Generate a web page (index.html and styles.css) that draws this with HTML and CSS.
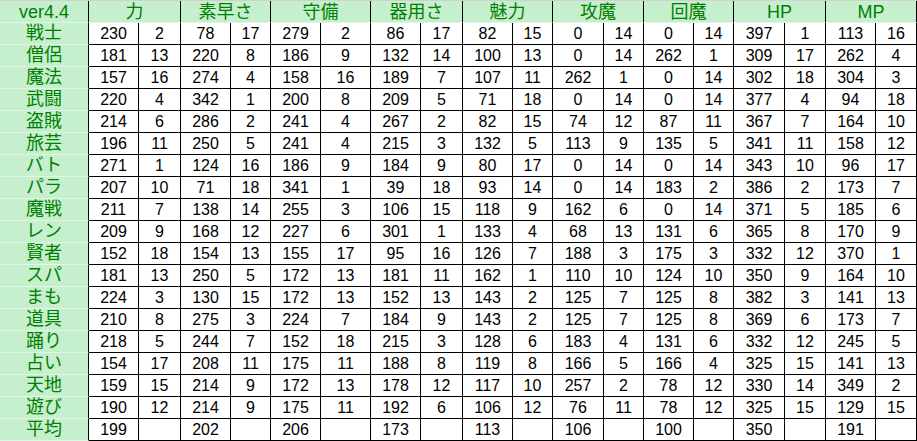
FILE: index.html
```html
<!DOCTYPE html>
<html lang="ja">
<head>
<meta charset="utf-8">
<title>ver4.4</title>
<link rel="stylesheet" href="styles.css">
</head>
<body>
<div class="sheet">
  <div class="row head">
    <span class="lab">ver4.4</span><span class="h">力</span><span class="h">素早さ</span><span class="h">守備</span><span class="h">器用さ</span><span class="h">魅力</span><span class="h">攻魔</span><span class="h">回魔</span><span class="h">HP</span><span class="h">MP</span>
  </div>
  <div class="row"><span class="lab">戦士</span><span>230</span><span>2</span><span>78</span><span>17</span><span>279</span><span>2</span><span>86</span><span>17</span><span>82</span><span>15</span><span>0</span><span>14</span><span>0</span><span>14</span><span>397</span><span>1</span><span>113</span><span>16</span></div>
  <div class="row"><span class="lab">僧侶</span><span>181</span><span>13</span><span>220</span><span>8</span><span>186</span><span>9</span><span>132</span><span>14</span><span>100</span><span>13</span><span>0</span><span>14</span><span>262</span><span>1</span><span>309</span><span>17</span><span>262</span><span>4</span></div>
  <div class="row"><span class="lab">魔法</span><span>157</span><span>16</span><span>274</span><span>4</span><span>158</span><span>16</span><span>189</span><span>7</span><span>107</span><span>11</span><span>262</span><span>1</span><span>0</span><span>14</span><span>302</span><span>18</span><span>304</span><span>3</span></div>
  <div class="row"><span class="lab">武闘</span><span>220</span><span>4</span><span>342</span><span>1</span><span>200</span><span>8</span><span>209</span><span>5</span><span>71</span><span>18</span><span>0</span><span>14</span><span>0</span><span>14</span><span>377</span><span>4</span><span>94</span><span>18</span></div>
  <div class="row"><span class="lab">盗賊</span><span>214</span><span>6</span><span>286</span><span>2</span><span>241</span><span>4</span><span>267</span><span>2</span><span>82</span><span>15</span><span>74</span><span>12</span><span>87</span><span>11</span><span>367</span><span>7</span><span>164</span><span>10</span></div>
  <div class="row"><span class="lab">旅芸</span><span>196</span><span>11</span><span>250</span><span>5</span><span>241</span><span>4</span><span>215</span><span>3</span><span>132</span><span>5</span><span>113</span><span>9</span><span>135</span><span>5</span><span>341</span><span>11</span><span>158</span><span>12</span></div>
  <div class="row"><span class="lab">バト</span><span>271</span><span>1</span><span>124</span><span>16</span><span>186</span><span>9</span><span>184</span><span>9</span><span>80</span><span>17</span><span>0</span><span>14</span><span>0</span><span>14</span><span>343</span><span>10</span><span>96</span><span>17</span></div>
  <div class="row"><span class="lab">パラ</span><span>207</span><span>10</span><span>71</span><span>18</span><span>341</span><span>1</span><span>39</span><span>18</span><span>93</span><span>14</span><span>0</span><span>14</span><span>183</span><span>2</span><span>386</span><span>2</span><span>173</span><span>7</span></div>
  <div class="row"><span class="lab">魔戦</span><span>211</span><span>7</span><span>138</span><span>14</span><span>255</span><span>3</span><span>106</span><span>15</span><span>118</span><span>9</span><span>162</span><span>6</span><span>0</span><span>14</span><span>371</span><span>5</span><span>185</span><span>6</span></div>
  <div class="row"><span class="lab">レン</span><span>209</span><span>9</span><span>168</span><span>12</span><span>227</span><span>6</span><span>301</span><span>1</span><span>133</span><span>4</span><span>68</span><span>13</span><span>131</span><span>6</span><span>365</span><span>8</span><span>170</span><span>9</span></div>
  <div class="row"><span class="lab">賢者</span><span>152</span><span>18</span><span>154</span><span>13</span><span>155</span><span>17</span><span>95</span><span>16</span><span>126</span><span>7</span><span>188</span><span>3</span><span>175</span><span>3</span><span>332</span><span>12</span><span>370</span><span>1</span></div>
  <div class="row"><span class="lab">スパ</span><span>181</span><span>13</span><span>250</span><span>5</span><span>172</span><span>13</span><span>181</span><span>11</span><span>162</span><span>1</span><span>110</span><span>10</span><span>124</span><span>10</span><span>350</span><span>9</span><span>164</span><span>10</span></div>
  <div class="row"><span class="lab">まも</span><span>224</span><span>3</span><span>130</span><span>15</span><span>172</span><span>13</span><span>152</span><span>13</span><span>143</span><span>2</span><span>125</span><span>7</span><span>125</span><span>8</span><span>382</span><span>3</span><span>141</span><span>13</span></div>
  <div class="row"><span class="lab">道具</span><span>210</span><span>8</span><span>275</span><span>3</span><span>224</span><span>7</span><span>184</span><span>9</span><span>143</span><span>2</span><span>125</span><span>7</span><span>125</span><span>8</span><span>369</span><span>6</span><span>173</span><span>7</span></div>
  <div class="row"><span class="lab">踊り</span><span>218</span><span>5</span><span>244</span><span>7</span><span>152</span><span>18</span><span>215</span><span>3</span><span>128</span><span>6</span><span>183</span><span>4</span><span>131</span><span>6</span><span>332</span><span>12</span><span>245</span><span>5</span></div>
  <div class="row"><span class="lab">占い</span><span>154</span><span>17</span><span>208</span><span>11</span><span>175</span><span>11</span><span>188</span><span>8</span><span>119</span><span>8</span><span>166</span><span>5</span><span>166</span><span>4</span><span>325</span><span>15</span><span>141</span><span>13</span></div>
  <div class="row"><span class="lab">天地</span><span>159</span><span>15</span><span>214</span><span>9</span><span>172</span><span>13</span><span>178</span><span>12</span><span>117</span><span>10</span><span>257</span><span>2</span><span>78</span><span>12</span><span>330</span><span>14</span><span>349</span><span>2</span></div>
  <div class="row"><span class="lab">遊び</span><span>190</span><span>12</span><span>214</span><span>9</span><span>175</span><span>11</span><span>192</span><span>6</span><span>106</span><span>12</span><span>76</span><span>11</span><span>78</span><span>12</span><span>325</span><span>15</span><span>129</span><span>15</span></div>
  <div class="row"><span class="lab">平均</span><span>199</span><span></span><span>202</span><span></span><span>206</span><span></span><span>173</span><span></span><span>113</span><span></span><span>106</span><span></span><span>100</span><span></span><span>350</span><span></span><span>191</span><span></span></div>
</div>
</body>
</html>
```

FILE: styles.css
```css
html, body {
  margin: 0;
  padding: 0;
  background: #ffffff;
}

.sheet {
  width: 917px;
  border-top: 1px solid #d0d0d0;
}

.row {
  display: grid;
  grid-template-columns: 89px 50px 42px 50px 40px 50px 50px 50px 42px 50px 40px 51px 40px 50px 40px 51px 41px 50px 41px;
  height: 22px;
}

.row span {
  box-sizing: border-box;
  height: 22px;
  border-right: 1px solid #000000;
  border-bottom: 1px solid #000000;
  text-align: center;
  font-family: "Liberation Sans", Arial, sans-serif;
  font-size: 16px;
  line-height: 22px;
  color: #000000;
  white-space: nowrap;
  overflow: hidden;
}

.row span.lab {
  background: #c6efce;
  color: #008000;
  font-family: "Liberation Sans", "Noto Sans CJK JP", sans-serif;
  font-size: 18px;
  line-height: 21px;
  border-bottom: 1px solid #e2f6e6;
}

.head span.h {
  grid-column: span 2;
  background: #c6efce;
  color: #008000;
  font-family: "Liberation Sans", "Noto Sans CJK JP", sans-serif;
  font-size: 18px;
  line-height: 23px;
  border-bottom: 1px solid #e2f6e6;
}

.head span.lab {
  line-height: 23px;
}
```
